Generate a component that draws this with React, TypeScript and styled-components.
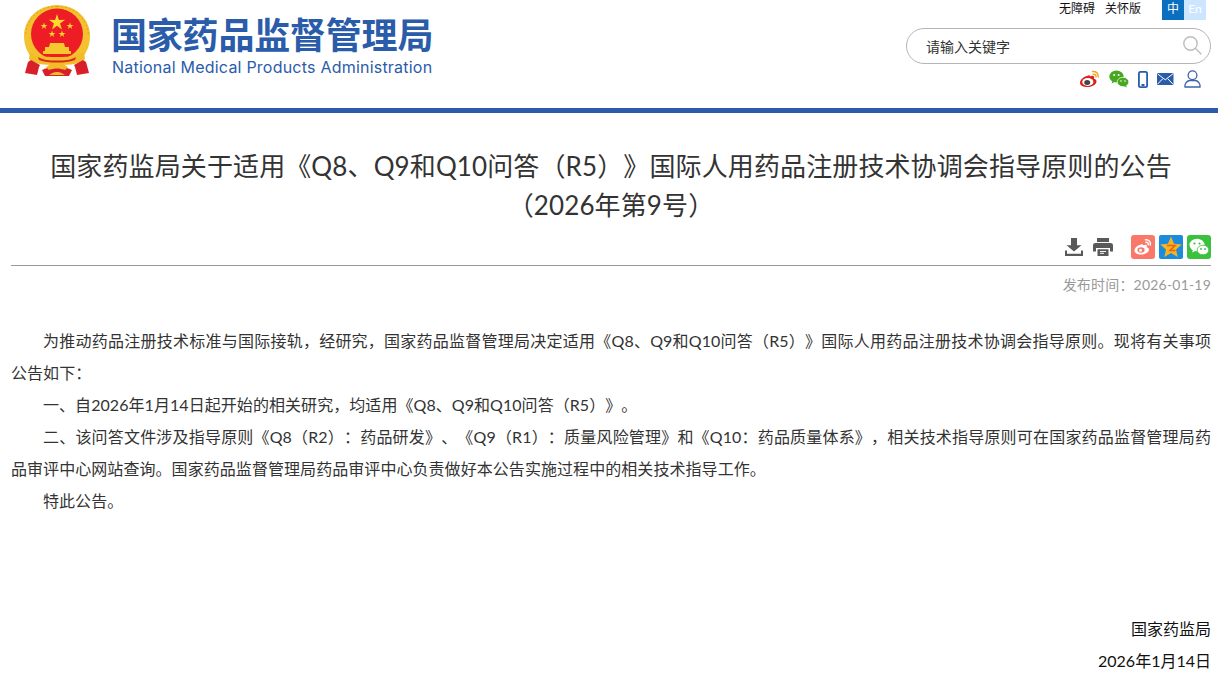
import React from 'react';
import styled, { createGlobalStyle } from 'styled-components';

const GlobalStyle = createGlobalStyle`
  html, body {
    margin: 0;
    padding: 0;
    background: #fff;
    overflow: hidden;
  }
  body {
    font-family: "Lato", "Noto Sans CJK SC", sans-serif;
    text-spacing-trim: space-all;
  }
`;

const Page = styled.div`
  width: 1218px;
  height: 677px;
  overflow: hidden;
`;

const Header = styled.header`
  height: 108px;
  border-bottom: 5px solid #2a5caa;
  display: flex;
  justify-content: space-between;
  padding: 0 7px 0 24px;
`;

const Brand = styled.div`
  display: flex;
  align-items: flex-start;
  padding-top: 5px;
  gap: 21px;
`;

const BrandText = styled.div`
  display: flex;
  flex-direction: column;
  color: #2a5caa;
  padding-top: 6px;
`;

const BrandName = styled.div`
  font-family: "Noto Sans CJK SC", sans-serif;
  font-size: 36px;
  font-weight: 700;
  line-height: 44px;
  letter-spacing: -0.2px;
  white-space: nowrap;
`;

const BrandEnglish = styled.div`
  font-family: "Inter", sans-serif;
  font-size: 16px;
  line-height: 20px;
  letter-spacing: 0.22px;
  margin: 2px 0 0 1px;
  white-space: nowrap;
`;

const Tools = styled.div`
  width: 306px;
  display: flex;
  flex-direction: column;
  align-items: flex-end;
`;

const TopLinks = styled.div`
  height: 20px;
  display: flex;
  align-items: flex-start;
  padding-right: 5px;
  font-size: 12px;
  line-height: 17px;
  color: #111;
`;

const TopLink = styled.span`
  margin-left: 10px;
`;

const LangSwitch = styled.div`
  display: flex;
  margin-left: 21px;
`;

const Lang = styled.span<{ $active?: boolean }>`
  width: 22px;
  height: 20px;
  line-height: 18px;
  text-align: center;
  font-size: 12px;
  color: #fff;
  background: ${(p) => (p.$active ? '#0b6fc0' : '#cde6ff')};
`;

const SearchBox = styled.div`
  margin-top: 8px;
  width: 305px;
  height: 36px;
  border: 1px solid #b5b5b5;
  border-radius: 18px;
  display: flex;
  align-items: center;
  justify-content: space-between;
  padding: 0 8px 1px 19px;
  box-sizing: border-box;
  font-size: 14px;
  color: #333;
`;

const SocialRow = styled.div`
  margin-top: 6px;
  display: flex;
  align-items: center;
  gap: 9px;
  padding-right: 10px;
`;

const Main = styled.main`
  padding: 0 7px 0 11px;
`;

const Title = styled.h1`
  margin: 34px 0 0;
  font-size: 26px;
  line-height: 39px;
  font-weight: 400;
  letter-spacing: 0.12px;
  color: #333;
  text-align: center;
`;

const ActionBar = styled.div`
  margin-top: 10px;
  height: 30px;
  border-bottom: 1px solid #999;
  display: flex;
  justify-content: flex-end;
  align-items: flex-start;
`;

const ActionGlyph = styled.span<{ $gap: number }>`
  height: 24px;
  margin-right: ${(p) => p.$gap}px;
  display: flex;
  align-items: center;
`;

const ShareIcon = styled.span`
  width: 24px;
  height: 24px;
  margin-left: 4px;
  display: block;
`;

const PublishTime = styled.div`
  margin-top: 9px;
  text-align: right;
  font-size: 14px;
  line-height: 20px;
  letter-spacing: 0.2px;
  color: #999;
`;

const Article = styled.article`
  margin-top: 30px;
  font-size: 16px;
  line-height: 32px;
  color: #333;
`;

const Para = styled.p`
  margin: 0;
  text-indent: 2em;
  text-align: justify;
  letter-spacing: 0.06px;
`;

const Signature = styled.p`
  margin: 0;
  text-align: right;
  color: #111;
`;

const Spacer = styled.div`
  height: 96px;
`;

const starPath = (cx: number, cy: number, r: number) => {
  const points: string[] = [];
  for (let i = 0; i < 10; i++) {
    const radius = i % 2 === 0 ? r : r * 0.38;
    const a = (Math.PI / 5) * i - Math.PI / 2;
    points.push(`${(cx + radius * Math.cos(a)).toFixed(2)} ${(cy + radius * Math.sin(a)).toFixed(2)}`);
  }
  return `M${points.join('L')}z`;
};

function Emblem() {
  return (
    <svg width="66" height="72" viewBox="0 0 66 72">
      <path d="M33 0C14 0 0 14 0 31c0 9 3 16 8 22l50 0c5-6 8-13 8-22C66 14 52 0 33 0z" fill="#f3c22e" />
      <path d="M33 1.500C15 1.500 1.500 15 1.500 31" fill="none" stroke="#e2a21c" strokeWidth="1" strokeDasharray="2 2" />
      <path d="M33 1.500C51 1.500 64.500 15 64.500 31" fill="none" stroke="#e2a21c" strokeWidth="1" strokeDasharray="2 2" />
      <ellipse cx="33" cy="29" rx="26" ry="25.500" fill="#ee1c25" />
      <path d={starPath(33, 17.500, 8.500)} fill="#ffd92e" />
      <path d={starPath(20, 21, 3.600)} fill="#ffd92e" />
      <path d={starPath(46, 21, 3.600)} fill="#ffd92e" />
      <path d={starPath(28, 29, 3.600)} fill="#ffd92e" />
      <path d={starPath(38, 29, 3.600)} fill="#ffd92e" />
      <path d="M26 38h14l1 4h4v4h-3v3H24v-3h-3v-4h4z" fill="#f6c82e" />
      <path d="M19 46h28v3H19z" fill="#f6c82e" />
      <path d="M6 46c6 5 10 6 27 6s21-1 27-6l1 8c-6 5-13 6-28 6S11 59 5 54z" fill="#f3bd2a" />
      <path d="M14 52c5 3 11 3.500 19 3.500S47 55 52 52l-1 3c-5 2-11 2.500-18 2.500S20 57 15 55z" fill="#d8281f" />
      <path d="M7 55l9 5-1 2-2 8-12-2 3-11zM59 55l-9 5 1 2 2 8 12-2-3-11z" fill="#d9202a" />
      <path d="M18 65c5-2 10-3.500 15-3.500s10 1.500 15 3.500l-3 6H21z" fill="#d9202a" />
      <path d="M22 62c3-2 7-4 11-4s8 2 11 4l-3 3c-3-1-5-1.500-8-1.500s-5 .5-8 1.500z" fill="#f3bd2a" />
      <path d="M25 70c3-2 5-3 8-3s5 1 8 3z" fill="#f3bd2a" />
    </svg>
  );
}

function SearchIcon() {
  return (
    <svg width="19" height="19" viewBox="0 0 19 19" fill="none" stroke="#bdbdbd" strokeWidth="1.4">
      <circle cx="7.500" cy="7.500" r="6.700" />
      <path d="M12.300 12.300l6 6" />
    </svg>
  );
}

function WeiboIcon() {
  return (
    <svg width="20" height="18" viewBox="0 0 20 18">
      <path d="M8.500 5.500C4 6.300 0 9.600 0 12.700 0 15.600 3.500 17 7.500 17c5 0 9-2.800 9-5.600 0-1.700-1.500-2.300-2.600-2.700.4-1.100.4-2.200-.5-2.700-1-.5-2.600-.1-3.600.4.200-1.300-.2-1.500-1.300-.9z" fill="#df1e1e" />
      <ellipse cx="7.800" cy="12" rx="5.600" ry="3.900" fill="#fff" />
      <ellipse cx="7.200" cy="12.400" rx="3" ry="2.500" fill="#444" />
      <path d="M12.600 1.500c3-.6 6 1.700 5.600 5.400M13.200 4.200c1.600-.3 3 .9 2.800 2.600" fill="none" stroke="#f3a51f" strokeWidth="1.500" strokeLinecap="round" />
    </svg>
  );
}

function WechatIcon() {
  return (
    <svg width="20" height="18" viewBox="0 0 20 18">
      <ellipse cx="7.500" cy="6.500" rx="7.200" ry="6" fill="#48a81f" />
      <path d="M3.500 10.500l-.8 3 3.200-1.800z" fill="#48a81f" />
      <ellipse cx="14" cy="12" rx="5.800" ry="4.700" fill="#48a81f" stroke="#fff" strokeWidth=".7" />
      <path d="M17 15l.8 2.500-3-1.400z" fill="#48a81f" />
      <circle cx="5.200" cy="5" r="1" fill="#fff" />
      <circle cx="9.600" cy="5" r="1" fill="#fff" />
      <circle cx="12" cy="11" r=".8" fill="#fff" />
      <circle cx="16" cy="11" r=".8" fill="#fff" />
    </svg>
  );
}

function PhoneIcon() {
  return (
    <svg width="10" height="17" viewBox="0 0 10 17">
      <rect x="0.900" y="0.900" width="8.200" height="15.200" rx="1.600" fill="#fff" stroke="#2a5caa" strokeWidth="1.800" />
      <rect x="3.500" y="13" width="3" height="2" fill="#2a5caa" />
    </svg>
  );
}

function MailIcon() {
  return (
    <svg width="18" height="12" viewBox="0 0 18 12">
      <rect width="16.500" height="12" rx="1" fill="#2a5caa" />
      <path d="M0.500 0.800l7.750 6 7.750-6M0.500 11.200l5.300-5.500M16 11.200l-5.300-5.500" fill="none" stroke="#fff" strokeWidth="1" />
    </svg>
  );
}

function UserIcon() {
  return (
    <svg width="17" height="18" viewBox="0 0 17 18" fill="none" stroke="#3c63ae" strokeWidth="1.300">
      <circle cx="8.500" cy="5.200" r="4.400" />
      <path d="M1 17c-.5-3.500 2-6 4.500-6.500h6C14 11 16.500 13.500 16 17z" />
    </svg>
  );
}

function DownloadIcon() {
  return (
    <svg width="18" height="18" viewBox="0 0 18 20" preserveAspectRatio="none" fill="#595959">
      <path d="M6 0h6v8h4.500L9 15 1.500 8H6z" />
      <path d="M0 14h2v3.500h14V14h2v6H0z" />
    </svg>
  );
}

function PrintIcon() {
  return (
    <svg width="20" height="18" viewBox="0 0 20 20" preserveAspectRatio="none" fill="#595959">
      <path d="M4 0h12v4.500H4z" />
      <path d="M2.500 5.500h15A2.500 2.500 0 0 1 20 8v7h-3v-4H3v4H0V8a2.500 2.500 0 0 1 2.500-2.500z" />
      <path d="M4.500 12.500h11V20h-11z" />
      <path d="M7 15h6M7 17h4" stroke="#fff" strokeWidth="1" />
    </svg>
  );
}

function ShareWeibo() {
  return (
    <svg width="24" height="24" viewBox="0 0 24 24">
      <rect width="24" height="24" rx="3" fill="#f9786a" />
      <path d="M10 9.500C6 10.500 3.500 13 3.500 15.500 3.500 18 6.500 19.500 10 19.500c4.500 0 8-2.500 8-5 0-1.500-1.300-2-2.300-2.300.4-1 .3-2-.4-2.400-1-.4-2.300 0-3.300.5.100-1-.6-1.200-2-.8z" fill="#fff" />
      <ellipse cx="10" cy="15" rx="3.600" ry="2.800" fill="#f9786a" />
      <circle cx="9.500" cy="15.300" r="1.500" fill="#fff" />
      <path d="M14.500 4.800c3-.5 5.500 2 4.800 5.200M15 7.300c1.500-.2 2.600 1 2.300 2.500" fill="none" stroke="#fff" strokeWidth="1.400" strokeLinecap="round" />
    </svg>
  );
}

function ShareQzone() {
  return (
    <svg width="24" height="24" viewBox="0 0 24 24">
      <rect width="24" height="24" rx="2" fill="#1b8be0" />
      <path d="M12 1.500l3 7.300 7.800.8-5.800 5 1.700 7.400L12 18l-6.700 4 1.700-7.400-5.800-5L9 8.800z" fill="#f6b51e" />
      <path d="M8 10.500h8l-5 5h5.500" fill="none" stroke="#e5631a" strokeWidth="1.600" />
    </svg>
  );
}

function ShareWechat() {
  return (
    <svg width="24" height="24" viewBox="0 0 24 24">
      <rect width="24" height="24" rx="3" fill="#3cc13f" />
      <ellipse cx="10" cy="10" rx="7.500" ry="6.300" fill="#fff" />
      <path d="M6 14.500l-.8 3 3.300-1.800z" fill="#fff" />
      <ellipse cx="16" cy="15" rx="5.800" ry="4.800" fill="#fff" stroke="#3cc13f" strokeWidth=".8" />
      <circle cx="7.500" cy="8.500" r="1.100" fill="#3cc13f" />
      <circle cx="12.500" cy="8.500" r="1.100" fill="#3cc13f" />
      <circle cx="14" cy="14" r=".9" fill="#3cc13f" />
      <circle cx="18" cy="14" r=".9" fill="#3cc13f" />
    </svg>
  );
}

export default function App() {
  return (
    <Page>
      <GlobalStyle />
      <Header>
        <Brand>
          <Emblem />
          <BrandText>
            <BrandName>国家药品监督管理局</BrandName>
            <BrandEnglish>National Medical Products Administration</BrandEnglish>
          </BrandText>
        </Brand>
        <Tools>
          <TopLinks>
            <TopLink>无障碍</TopLink>
            <TopLink>关怀版</TopLink>
            <LangSwitch>
              <Lang $active>中</Lang>
              <Lang>En</Lang>
            </LangSwitch>
          </TopLinks>
          <SearchBox>
            <span>请输入关键字</span>
            <SearchIcon />
          </SearchBox>
          <SocialRow>
            <WeiboIcon />
            <WechatIcon />
            <PhoneIcon />
            <MailIcon />
            <UserIcon />
          </SocialRow>
        </Tools>
      </Header>
      <Main>
        <Title>
          国家药监局关于适用《Q8、Q9和Q10问答（R5）》国际人用药品注册技术协调会指导原则的公告
          <br />
          （2026年第9号）
        </Title>
        <ActionBar>
          <ActionGlyph $gap={10}><DownloadIcon /></ActionGlyph>
          <ActionGlyph $gap={14}><PrintIcon /></ActionGlyph>
          <ShareIcon><ShareWeibo /></ShareIcon>
          <ShareIcon><ShareQzone /></ShareIcon>
          <ShareIcon><ShareWechat /></ShareIcon>
        </ActionBar>
        <PublishTime>发布时间：2026-01-19</PublishTime>
        <Article>
          <Para>为推动药品注册技术标准与国际接轨，经研究，国家药品监督管理局决定适用《Q8、Q9和Q10问答（R5）》国际人用药品注册技术协调会指导原则。现将有关事项公告如下：</Para>
          <Para>一、自2026年1月14日起开始的相关研究，均适用《Q8、Q9和Q10问答（R5）》。</Para>
          <Para>二、该问答文件涉及指导原则《Q8（R2）：药品研发》、《Q9（R1）：质量风险管理》和《Q10：药品质量体系》，相关技术指导原则可在国家药品监督管理局药品审评中心网站查询。国家药品监督管理局药品审评中心负责做好本公告实施过程中的相关技术指导工作。</Para>
          <Para>特此公告。</Para>
          <Spacer />
          <Signature>国家药监局</Signature>
          <Signature>2026年1月14日</Signature>
        </Article>
      </Main>
    </Page>
  );
}
